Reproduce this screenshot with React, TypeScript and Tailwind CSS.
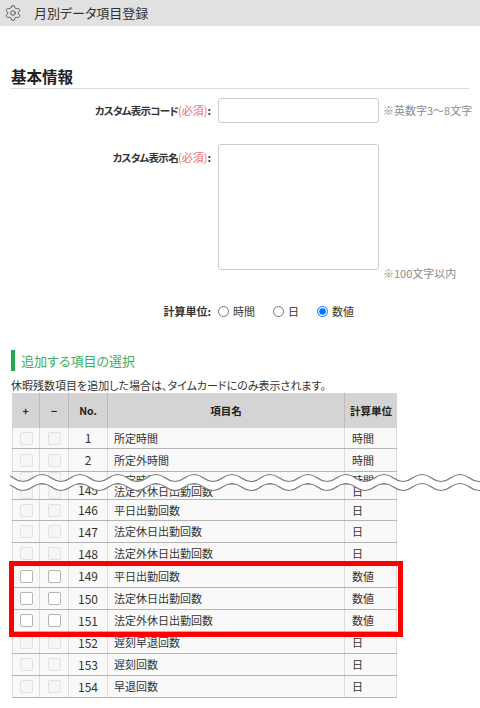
import { Settings } from "lucide-react";

const FONT = "font-['Noto_Sans_CJK_JP','Noto_Sans',sans-serif] [font-feature-settings:'palt']";

type RowData = { no: string; name: string; unit: string; h: string; align?: string };

const topRows: RowData[] = [
  { no: "1", name: "所定時間", unit: "時間", h: "h-[21px]" },
  { no: "2", name: "所定外時間", unit: "時間", h: "h-[23px]" },
  { no: "3", name: "法定時間", unit: "時間", h: "h-[13px]", align: "items-start" },
  { no: "145", name: "法定外休日出勤回数", unit: "日", h: "h-[15px]", align: "items-end" },
  { no: "146", name: "平日出勤回数", unit: "日", h: "h-[21px]" },
  { no: "147", name: "法定休日出勤回数", unit: "日", h: "h-[22px]" },
  { no: "148", name: "法定外休日出勤回数", unit: "日", h: "h-[22px]" },
];

const activeRows: RowData[] = [
  { no: "149", name: "平日出勤回数", unit: "数値", h: "h-[23px]" },
  { no: "150", name: "法定休日出勤回数", unit: "数値", h: "h-[22px]" },
  { no: "151", name: "法定外休日出勤回数", unit: "数値", h: "h-[22px]" },
];

const bottomRows: RowData[] = [
  { no: "152", name: "遅刻早退回数", unit: "日", h: "h-[22px]" },
  { no: "153", name: "遅刻回数", unit: "日", h: "h-[22px]" },
  { no: "154", name: "早退回数", unit: "日", h: "h-[22px]" },
];

function Box({ active }: { active?: boolean }) {
  return (
    <span
      className={
        active
          ? "block size-[13px] rounded-[2px] border border-[#b5b5b5] bg-white"
          : "block size-[13px] rounded-[2px] border border-[#e2e2e2] bg-[#f6f6f6]"
      }
    />
  );
}

function Row({ row, active }: { row: RowData; active?: boolean }) {
  const align = row.align ?? "items-center";
  return (
    <div className={`flex overflow-hidden border-b border-[#b4b4b4] bg-[#f9f9f9] text-[11px] text-[#333] ${row.h}`}>
      <div className={`flex w-[28px] justify-center border-x border-[#dcdcdc] ${align}`}>
        <Box active={active} />
      </div>
      <div className={`flex w-[29px] justify-center border-r border-[#dcdcdc] ${align}`}>
        <Box active={active} />
      </div>
      <div className={`flex w-[39px] justify-center border-r border-[#dcdcdc] text-[12px] ${align}`}>{row.no}</div>
      <div className={`flex w-[237px] border-r border-[#dcdcdc] pl-[6px] ${align}`}>{row.name}</div>
      <div className={`flex w-[52px] border-r border-[#dcdcdc] pl-[7px] ${align}`}>{row.unit}</div>
    </div>
  );
}

function Radio({ label, checked }: { label: string; checked?: boolean }) {
  return (
    <label className="flex items-center gap-[4px]">
      <input type="radio" name="unit" defaultChecked={checked} className="m-0 size-[11px] accent-[#0075ff]" />
      <span>{label}</span>
    </label>
  );
}

// one wavy line, period 38px, peaks at x = 4 + 38k
function wave(cy: number) {
  let d = `M-5.5 ${cy}`;
  let x = -5.5;
  let up = true;
  while (x < 490) {
    d += ` Q${x + 9.5} ${cy + (up ? -7 : 7)} ${x + 19} ${cy}`;
    x += 19;
    up = !up;
  }
  return d;
}

function WaveBreak() {
  return (
    <svg className="absolute top-[470px] left-[10px]" width="470" height="26" viewBox="10 0 470 26" fill="none">
      <path d={wave(12.5)} stroke="white" strokeWidth="8.5" />
      <path d={wave(8)} stroke="#777" strokeWidth="1.2" />
      <path d={wave(17)} stroke="#777" strokeWidth="1.2" />
    </svg>
  );
}

export default function App() {
  return (
    <div className={`relative h-[708px] w-[480px] overflow-hidden bg-white ${FONT}`}>
      {/* Title bar */}
      <div className="flex h-[26px] items-center bg-[#e1e1e1] pl-[4px] text-[13px] text-[#333]">
        <Settings size={18} strokeWidth={1} className="text-[#333]" />
        <span className="ml-[12px]">月別データ項目登録</span>
      </div>

      {/* Basic info */}
      <h2 className="mx-[11px] mt-[40px] h-[23px] border-b border-[#dcdcdc] text-[15.5px] leading-[21px] font-bold text-[#222]">
        基本情報
      </h2>
      <div className="mt-[9px] flex h-[25px] items-center text-[11px]">
        <div className="w-[211px] text-right font-bold text-[#333]">
          <span className="text-[10.5px] tracking-[-0.7px]">カスタム表示コード</span>
          <span className="font-normal text-[#ee6b6b]">(必須)</span>:
        </div>
        <input className="ml-[7px] h-[25px] w-[161px] rounded-[3px] border border-[#ccc] bg-white" />
        <span className="ml-[4px] text-[#8c8c8c]">※英数字3〜8文字</span>
      </div>
      <div className="mt-[21px] flex text-[11px]">
        <div className="mt-[5px] w-[211px] text-right font-bold text-[#333]">
          <span className="text-[10.5px] tracking-[-0.7px]">カスタム表示名</span>
          <span className="font-normal text-[#ee6b6b]">(必須)</span>:
        </div>
        <textarea className="ml-[7px] h-[126px] w-[161px] resize-none rounded-[3px] border border-[#ccc] bg-white" />
        <span className="ml-[4px] translate-y-[9px] self-end leading-[12px] text-[#8c8c8c]">※100文字以内</span>
      </div>
      <div className="mt-[33px] flex h-[16px] items-center text-[11px] text-[#333]">
        <div className="w-[211px] text-right font-bold">計算単位:</div>
        <div className="ml-[7px] flex gap-[18px]">
          <Radio label="時間" />
          <Radio label="日" />
          <Radio label="数値" checked />
        </div>
      </div>

      {/* Item selection */}
      <div className="mx-[11px] mt-[31px] flex h-[21px] items-center border-l-[4px] border-[#22a94f] pl-[6px] text-[13px] text-[#3fae62]">
        追加する項目の選択
      </div>
      <p className="mx-[11px] mt-[6px] h-[16px] text-[11px] leading-[16px] text-[#333]">
        休暇残数項目を追加した場合は、タイムカードにのみ表示されます。
      </p>
      <div className="mx-[12px] w-[385px]">
        <div className="flex h-[35px] bg-[#d4d4d4] text-[10.5px] font-bold text-[#222]">
          <div className="flex w-[28px] items-center justify-center border-r border-[#bbb]">+</div>
          <div className="flex w-[29px] items-center justify-center border-r border-[#bbb]">−</div>
          <div className="flex w-[39px] items-center justify-center border-r border-[#bbb]">No.</div>
          <div className="flex w-[237px] items-center justify-center border-r border-[#bbb]">項目名</div>
          <div className="flex w-[52px] items-center justify-center">計算単位</div>
        </div>
        {topRows.map(row => (
          <Row key={row.no} row={row} />
        ))}
        {activeRows.map(row => (
          <Row key={row.no} row={row} active />
        ))}
        {bottomRows.map(row => (
          <Row key={row.no} row={row} />
        ))}
      </div>

      {/* Wavy break across the table */}
      <WaveBreak />

      {/* Highlight frame */}
      <div className="absolute top-[561px] left-[9px] h-[76px] w-[394px] border-[5px] border-[#f00]" />
    </div>
  );
}
